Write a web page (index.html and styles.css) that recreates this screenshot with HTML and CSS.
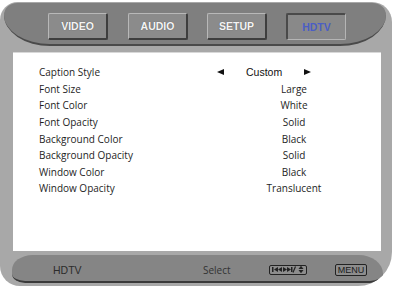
FILE: index.html
```html
<!DOCTYPE html>
<html>
<head>
  <title>HDTV Caption Settings</title>
  <link rel="stylesheet" href="styles.css">
</head>
<body>
  <div class="device">
    <!-- Top tab bar -->
    <div class="tabbar">
      <div class="tab">VIDEO</div>
      <div class="tab">AUDIO</div>
      <div class="tab">SETUP</div>
      <div class="tab active">HDTV</div>
    </div>

    <!-- Settings list -->
    <div class="screen">
      <div class="settings">
        <div class="label">Caption Style</div>
        <div class="value chooser">
          <span class="arrow left"></span>
          <span class="custom">Custom</span>
          <span class="arrow right"></span>
        </div>

        <div class="label">Font Size</div>
        <div class="value">Large</div>

        <div class="label">Font Color</div>
        <div class="value">White</div>

        <div class="label">Font Opacity</div>
        <div class="value">Solid</div>

        <div class="label">Background Color</div>
        <div class="value">Black</div>

        <div class="label">Background Opacity</div>
        <div class="value">Solid</div>

        <div class="label">Window Color</div>
        <div class="value">Black</div>

        <div class="label">Window Opacity</div>
        <div class="value">Translucent</div>
      </div>
    </div>

    <!-- Bottom status bar -->
    <div class="statusbar">
      <span class="status-title">HDTV</span>
      <span class="status-select">Select</span>
      <span class="keybox nav">
        <svg width="36" height="9" viewBox="0 0 36 9">
          <rect x="2" y="2" width="1.5" height="5" fill="#222"/>
          <polygon points="8,2 4,4.5 8,7" fill="#222"/>
          <polygon points="12,2 8,4.5 12,7" fill="#222"/>
          <polygon points="13,2 17,4.5 13,7" fill="#222"/>
          <polygon points="17,2 21,4.5 17,7" fill="#222"/>
          <rect x="21" y="2" width="1.5" height="5" fill="#222"/>
          <line x1="23" y1="7.5" x2="25.5" y2="1.5" stroke="#222" stroke-width="1.2"/>
          <polygon points="31,0.8 28.5,4 33.5,4" fill="#222"/>
          <polygon points="31,8.2 28.5,5 33.5,5" fill="#222"/>
        </svg>
      </span>
      <span class="keybox menu">MENU</span>
    </div>
  </div>
</body>
</html>
```

FILE: styles.css
```css
body {
  margin: 0;
  background-color: #fff;
  font-family: "Liberation Sans", Arial, sans-serif;
}

.device {
  width: 392px;
  height: 284px;
  margin-top: 2px;
  background-color: #a8a8a8;
  border-radius: 18px 20px 34px 20px;
  display: flex;
  flex-direction: column;
  overflow: hidden;
}

/* top tabs */
.tabbar {
  height: 43px;
  margin: 1px 6px 0 4px;
  background-color: #7f7f7f;
  border-bottom: 2px solid #4a4a4a;
  border-radius: 13px 13px 46px 46px / 12px 12px 31px 31px;
  display: flex;
  align-items: flex-start;
  padding-top: 10px;
  padding-left: 44px;
  gap: 19px;
  box-sizing: border-box;
}

.tab {
  width: 57px;
  height: 24px;
  background-color: #8b8b8b;
  border-top: 1px solid #b8b8b8;
  border-left: 1px solid #b8b8b8;
  border-right: 2px solid #3e3e3e;
  border-bottom: 2px solid #3e3e3e;
  border-radius: 2px;
  color: #f4f4f4;
  font-weight: bold;
  font-size: 10.5px;
  display: flex;
  align-items: center;
  justify-content: center;
  text-shadow: 0 0 1px rgba(0, 0, 0, 0.4);
}

.tab:nth-child(2) {
  margin-left: 1px;
}

.tab.active {
  border-top: 2px solid #4a4a4a;
  border-left: 2px solid #4a4a4a;
  border-right: 1px solid #b5b5b5;
  border-bottom: 1px solid #b5b5b5;
  color: #4b5ec4;
  background-color: #898989;
  text-shadow: none;
}

/* white screen */
.screen {
  height: 199px;
  margin: 6px 11px 0 13px;
  background-color: #fff;
  border-top: 1px solid #d8d8d8;
  box-sizing: border-box;
}

.settings {
  display: grid;
  grid-template-columns: 215px 80px;
  grid-auto-rows: 16.6px;
  padding: 11px 0 0 26px;
  font-family: "Open Sans", "Noto Sans", sans-serif;
  font-size: 10px;
  color: #1e1e1e;
  align-items: center;
}

.value {
  text-align: center;
}

.chooser {
  display: flex;
  align-items: center;
  margin-left: -37px;
  width: 100px;
  gap: 22px;
  font-family: "Liberation Sans", Arial, sans-serif;
  font-size: 10.5px;
  color: #111;
}

.arrow {
  width: 0;
  height: 0;
  border-top: 3.5px solid transparent;
  border-bottom: 3.5px solid transparent;
}

.arrow.left {
  border-right: 7px solid #111;
}

.arrow.right {
  border-left: 7px solid #111;
}

/* bottom bar */
.statusbar {
  height: 28px;
  margin: 4px 9px 0 12px;
  background-color: #858585;
  border-bottom: 2px solid #3a3a3a;
  border-radius: 22px 26px 14px 14px / 16px 20px 10px 10px;
  box-sizing: border-box;
  display: flex;
  align-items: center;
  font-size: 10.5px;
  color: #2c2c2c;
  padding-top: 3px;
}

.status-title {
  margin-left: 41px;
  width: 150px;
}

.status-select {
  width: 66px;
  font-family: "Open Sans", "Noto Sans", sans-serif;
  font-size: 10px;
  color: #333;
}

.keybox {
  border: 1px solid #222;
  border-radius: 2px;
  height: 10px;
  box-sizing: border-box;
  display: flex;
  align-items: center;
}

.keybox.nav {
  width: 38px;
  background-color: #8d8d8d;
}

.keybox.menu {
  margin-left: 28px;
  width: 32px;
  height: 12px;
  justify-content: center;
  font-size: 9px;
  color: #1a1a1a;
  background-color: #8d8d8d;
}
```
